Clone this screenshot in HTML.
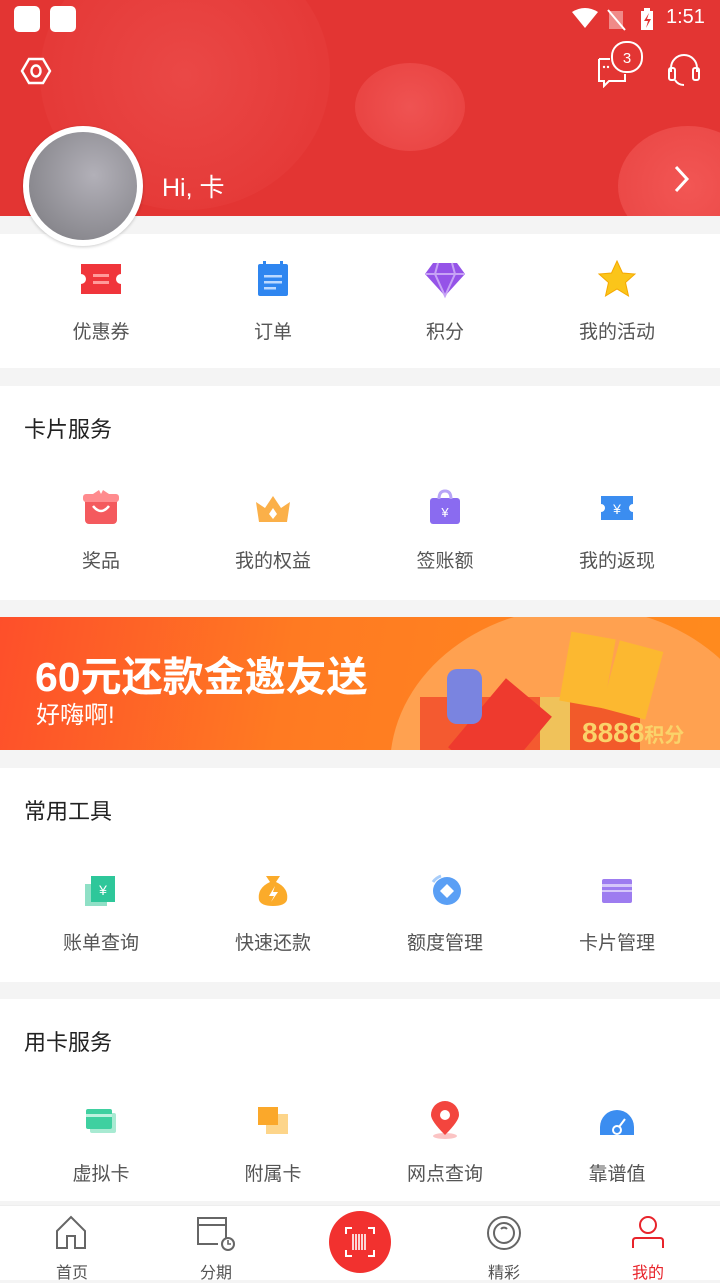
<!DOCTYPE html>
<html><head><meta charset="utf-8"><style>
*{margin:0;padding:0;box-sizing:border-box}
body{width:720px;height:1280px;overflow:hidden;background:#f4f4f4;font-family:"Liberation Sans","Noto Sans CJK SC",sans-serif;position:relative}
.hdr{position:absolute;left:0;top:0;width:720px;height:216px;background:#e33533;overflow:hidden}
.c{position:absolute;border-radius:50%}
.sec{position:absolute;left:0;width:720px;background:#fff}
.title{position:absolute;left:24px;font-size:22px;color:#222}
.row{position:absolute;left:0;width:720px;display:flex;padding-left:15px}
.it{width:172px;text-align:center;font-size:19px;color:#555;position:relative}
.it .ic{width:44px;height:44px;margin:0 auto;position:relative}
.tab{position:absolute;top:1205px;left:0;width:720px;height:75px;background:#fff;border-top:1px solid #eee}
.tb{position:absolute;top:53px;font-size:16px;color:#555;width:60px;text-align:center}
</style></head><body>
<div class="hdr">
 <div class="c" style="left:40px;top:-60px;width:290px;height:270px;background:radial-gradient(circle,#ea4846 0%,#e53a38 70%,#e33533 100%)"></div>
 <div class="c" style="left:355px;top:63px;width:110px;height:88px;background:radial-gradient(circle,#ef5352,#e8403e)"></div>
 <div class="c" style="left:618px;top:126px;width:140px;height:120px;background:radial-gradient(circle,#f25654,#e94543)"></div>
 <div style="position:absolute;left:14px;top:6px;width:26px;height:26px;background:#fff;border-radius:5px"></div>
 <div style="position:absolute;left:50px;top:6px;width:26px;height:26px;background:#fff;border-radius:5px"></div>
 <svg style="position:absolute;left:570px;top:6px" width="140" height="28">
  <path d="M2 6 Q15 -2 28 6 L15 22Z" fill="#fff"/>
  <rect x="39" y="5" width="14" height="18" fill="#f08a88"/><line x1="38" y1="4" x2="55" y2="24" stroke="#fff" stroke-width="2"/>
  <rect x="71" y="5" width="12" height="19" fill="#fff"/><rect x="74" y="2" width="6" height="3" fill="#fff"/><path d="M79 7 L74 15 L78 15 L76 22 L81 13 L77 13Z" fill="#e33533"/>
 </svg>
 <div style="position:absolute;left:666px;top:6px;color:#fff;font-size:20px">1:51</div>
 <svg style="position:absolute;left:20px;top:56px" width="32" height="30"><path d="M9 3 H23 L30 15 L23 27 H9 L2 15Z" fill="none" stroke="#fff" stroke-width="2.4"/><ellipse cx="16" cy="15" rx="4.5" ry="5.5" fill="none" stroke="#fff" stroke-width="2.4"/></svg>
 <svg style="position:absolute;left:596px;top:40px" width="50" height="48"><path d="M3 19 H14 M3 19 V41 H8 V46 L13 41 H29 V34" fill="none" stroke="#fff" stroke-width="2"/><rect x="16" y="2" width="30" height="30" rx="14" fill="#e33533" stroke="#fff" stroke-width="2"/><text x="31" y="23" fill="#fff" font-size="15" text-anchor="middle" font-family="Liberation Sans">3</text><circle cx="8" cy="27" r="1.2" fill="#fff"/><circle cx="12" cy="27" r="1.2" fill="#fff"/></svg>
 <svg style="position:absolute;left:666px;top:54px" width="36" height="34"><path d="M5 18 V14 A13 13 0 0 1 31 14 V18" fill="none" stroke="#fff" stroke-width="2"/><rect x="3" y="14" width="6" height="12" rx="2" fill="none" stroke="#fff" stroke-width="2"/><rect x="27" y="14" width="6" height="12" rx="2" fill="none" stroke="#fff" stroke-width="2"/><path d="M9 26 Q12 31 18 31" fill="none" stroke="#fff" stroke-width="2"/></svg>
 <div style="position:absolute;left:162px;top:168px;color:#fff;font-size:25px">Hi, 卡</div>
 <svg style="position:absolute;left:672px;top:164px" width="20" height="30"><path d="M4 3 L15 15 L4 27" fill="none" stroke="#fff" stroke-width="3"/></svg>
</div>
<div class="sec" style="top:234px;height:134px">
 <div class="row" style="top:26px">
  <div class="it"><div class="ic"><svg width="44" height="40"><path d="M2 4 H42 V14 A5 5 0 0 0 42 24 V34 H2 V24 A5 5 0 0 0 2 14Z" fill="#f0353b"/><rect x="14" y="14" width="16" height="3" fill="#ff9a9a"/><rect x="14" y="21" width="16" height="3" fill="#ff9a9a"/></svg></div><div style="margin-top:13px">优惠券</div></div>
  <div class="it"><div class="ic"><svg width="44" height="40"><rect x="7" y="4" width="30" height="32" rx="2" fill="#2f86f0"/><rect x="12" y="1" width="3" height="6" fill="#2f86f0"/><rect x="29" y="1" width="3" height="6" fill="#2f86f0"/><rect x="13" y="15" width="18" height="2.5" fill="#bcd9ff"/><rect x="13" y="21" width="18" height="2.5" fill="#bcd9ff"/><rect x="13" y="27" width="12" height="2.5" fill="#bcd9ff"/></svg></div><div style="margin-top:13px">订单</div></div>
  <div class="it"><div class="ic"><svg width="44" height="40"><path d="M10 3 H34 L42 14 L22 36 L2 14Z" fill="#9553e8"/><path d="M2 14 H42 M15 3 L12 14 L22 36 L32 14 L29 3" fill="none" stroke="#c7a3f5" stroke-width="2"/></svg></div><div style="margin-top:13px">积分</div></div>
  <div class="it"><div class="ic"><svg width="44" height="40"><path d="M22 1 L27.5 13 L40 14 L30.5 22.5 L33.5 36 L22 29 L10.5 36 L13.5 22.5 L4 14 L16.5 13Z" fill="#fbc51a" stroke="#f5a800" stroke-width="1"/></svg></div><div style="margin-top:13px">我的活动</div></div>
 </div>
</div>
<div class="sec" style="top:386px;height:214px">
 <div class="title" style="top:26px">卡片服务</div>
 <div class="row" style="top:100px">
  <div class="it"><div class="ic"><svg width="44" height="44"><rect x="6" y="10" width="32" height="28" rx="4" fill="#f45a5e"/><rect x="4" y="8" width="36" height="8" rx="3" fill="#ff8b8e"/><path d="M14 20 Q22 30 30 20" fill="none" stroke="#fff" stroke-width="2.5"/><path d="M14 8 L20 4 L22 8 L24 4 L30 8" fill="#ff8b8e"/></svg></div><div style="margin-top:16px">奖品</div></div>
  <div class="it"><div class="ic"><svg width="44" height="44"><path d="M5 16 L14 22 L22 10 L30 22 L39 16 L36 36 H8Z" fill="#fbb049"/><path d="M22 22 L26 28 L22 33 L18 28Z" fill="#fff"/></svg></div><div style="margin-top:16px">我的权益</div></div>
  <div class="it"><div class="ic"><svg width="44" height="44"><rect x="7" y="12" width="30" height="26" rx="3" fill="#8a6bf0"/><path d="M16 13 Q16 5 22 5 Q28 5 28 13" fill="none" stroke="#b7a4f7" stroke-width="3"/><text x="22" y="31" fill="#fff" font-size="13" text-anchor="middle" font-family="Liberation Sans">¥</text></svg></div><div style="margin-top:16px">签账额</div></div>
  <div class="it"><div class="ic"><svg width="44" height="44"><path d="M6 10 H38 V18 A4 4 0 0 0 38 26 V34 H6 V26 A4 4 0 0 0 6 18Z" fill="#3b8df0"/><text x="22" y="28" fill="#fff" font-size="14" text-anchor="middle" font-family="Liberation Sans">¥</text></svg></div><div style="margin-top:16px">我的返现</div></div>
 </div>
</div>
<div style="position:absolute;left:0;top:617px;width:720px;height:133px;background:linear-gradient(100deg,#fe4f2a 0%,#ff7a22 40%,#ff8b1e 100%);overflow:hidden">
 <div class="c" style="left:390px;top:-10px;width:380px;height:320px;background:#ffa150"></div>
 <div style="position:absolute;left:35px;top:26px;color:#fff;font-size:41px;font-weight:bold;letter-spacing:0px">60元还款金邀友送</div>
 <div style="position:absolute;left:36px;top:78px;color:#fff;font-size:24px">好嗨啊!</div>
 <div style="position:absolute;left:420px;top:80px;width:150px;height:55px;background:#f45a30"></div>
 <div style="position:absolute;left:540px;top:80px;width:100px;height:55px;background:#f0c25a"></div>
 <div style="position:absolute;left:570px;top:80px;width:70px;height:55px;background:#f25a2a"></div>
 <div style="position:absolute;left:565px;top:18px;width:45px;height:70px;background:#fcb830;transform:rotate(10deg)"></div>
 <div style="position:absolute;left:610px;top:28px;width:45px;height:70px;background:#fcb830;transform:rotate(15deg)"></div>
 <div style="position:absolute;left:470px;top:70px;width:60px;height:90px;background:#ee3a2e;transform:rotate(40deg)"></div>
 <div style="position:absolute;left:447px;top:52px;width:35px;height:55px;background:#7a84e0;border-radius:10px"></div>
 <div style="position:absolute;left:582px;top:100px;color:#fad36a;font-size:28px;font-weight:bold">8888<span style="font-size:20px">积分</span></div>
</div>
<div class="sec" style="top:768px;height:214px">
 <div class="title" style="top:26px">常用工具</div>
 <div class="row" style="top:100px">
  <div class="it"><div class="ic"><svg width="44" height="44"><rect x="6" y="16" width="22" height="22" fill="#8fe0c6"/><rect x="12" y="8" width="24" height="26" fill="#2ec79a"/><text x="24" y="27" fill="#fff" font-size="14" text-anchor="middle" font-family="Liberation Sans">¥</text></svg></div><div style="margin-top:16px">账单查询</div></div>
  <div class="it"><div class="ic"><svg width="44" height="44"><path d="M15 8 H29 L25 14 Q38 20 36 32 Q34 38 22 38 Q10 38 8 32 Q6 20 19 14Z" fill="#fbab2a"/><path d="M24 18 L18 28 H23 L20 34 L27 24 H22Z" fill="#fff"/></svg></div><div style="margin-top:16px">快速还款</div></div>
  <div class="it"><div class="ic"><svg width="44" height="44"><circle cx="24" cy="23" r="14" fill="#5a9ff5"/><path d="M24 16 L31 23 L24 30 L17 23Z" fill="#fff"/><path d="M10 14 A16 16 0 0 1 18 8" fill="none" stroke="#a8cdfa" stroke-width="3"/></svg></div><div style="margin-top:16px">额度管理</div></div>
  <div class="it"><div class="ic"><svg width="44" height="44"><rect x="7" y="11" width="30" height="24" rx="2" fill="#9d7cf0"/><rect x="7" y="16" width="30" height="3" fill="#d5c7fa"/><rect x="7" y="22" width="30" height="2" fill="#d5c7fa"/></svg></div><div style="margin-top:16px">卡片管理</div></div>
 </div>
</div>
<div class="sec" style="top:999px;height:202px">
 <div class="title" style="top:26px">用卡服务</div>
 <div class="row" style="top:100px">
  <div class="it"><div class="ic"><svg width="44" height="44"><rect x="11" y="14" width="26" height="20" rx="2" fill="#a8ead2"/><rect x="7" y="10" width="26" height="20" rx="2" fill="#3fd0a0"/><rect x="7" y="15" width="26" height="3" fill="#bff2df"/></svg></div><div style="margin-top:16px">虚拟卡</div></div>
  <div class="it"><div class="ic"><svg width="44" height="44"><rect x="15" y="15" width="22" height="20" fill="#fdd58a"/><rect x="7" y="8" width="20" height="18" fill="#fba82a"/></svg></div><div style="margin-top:16px">附属卡</div></div>
  <div class="it"><div class="ic"><svg width="44" height="44"><ellipse cx="22" cy="37" rx="12" ry="3" fill="#fbc4c4"/><path d="M22 36 Q8 22 8 16 A14 14 0 0 1 36 16 Q36 22 22 36Z" fill="#f3453e"/><circle cx="22" cy="16" r="5" fill="#fff"/></svg></div><div style="margin-top:16px">网点查询</div></div>
  <div class="it"><div class="ic"><svg width="44" height="44"><path d="M5 36 V28 A17 17 0 0 1 39 28 V36Z" fill="#3b8df0"/><circle cx="22" cy="31" r="4" fill="none" stroke="#fff" stroke-width="2"/><path d="M24 28 L30 20" stroke="#fff" stroke-width="2"/></svg></div><div style="margin-top:16px">靠谱值</div></div>
 </div>
</div>
<div class="tab">
 <svg style="position:absolute;left:54px;top:8px" width="36" height="36"><path d="M3 17 L17 3 L31 17 V34 H21 V22 H13 V34 H3Z" fill="none" stroke="#666" stroke-width="2"/></svg>
 <div class="tb" style="left:42px">首页</div>
 <svg style="position:absolute;left:196px;top:10px" width="44" height="36"><path d="M30 23 V2 H2 V28 H22" fill="none" stroke="#666" stroke-width="2"/><line x1="2" y1="9" x2="30" y2="9" stroke="#666" stroke-width="2"/><circle cx="32" cy="28" r="6" fill="none" stroke="#666" stroke-width="2"/><path d="M32 24 V28 H35" fill="none" stroke="#666" stroke-width="1.6"/></svg>
 <div class="tb" style="left:186px">分期</div>
 <div style="position:absolute;left:329px;top:5px;width:62px;height:62px;border-radius:50%;background:#f2312f"></div>
 <svg style="position:absolute;left:344px;top:20px" width="32" height="32"><path d="M2 8 V2 H8 M24 2 H30 V8 M30 24 V30 H24 M8 30 H2 V24" fill="none" stroke="#fff" stroke-width="2"/><path d="M9 8 V24 M12 8 V24 M15 8 V24 M18 8 V24 M21 8 V24" stroke="#fff" stroke-width="1.6"/></svg>
 <svg style="position:absolute;left:485px;top:8px" width="38" height="38"><circle cx="19" cy="19" r="16" fill="none" stroke="#666" stroke-width="2"/><circle cx="19" cy="19" r="10" fill="none" stroke="#666" stroke-width="2"/><path d="M16 15 A4 4 0 0 1 22 15" fill="none" stroke="#666" stroke-width="2"/></svg>
 <div class="tb" style="left:474px">精彩</div>
 <svg style="position:absolute;left:630px;top:8px" width="36" height="36"><circle cx="18" cy="11" r="8" fill="none" stroke="#e8242b" stroke-width="2"/><path d="M3 34 V27 Q3 24 6 24 H30 Q33 24 33 27 V34" fill="none" stroke="#e8242b" stroke-width="2"/></svg>
 <div class="tb" style="left:618px;color:#e8242b">我的</div>
</div>
<div style="position:absolute;left:23px;top:126px;width:120px;height:120px;border-radius:50%;background:#fff;box-shadow:0 1px 3px rgba(0,0,0,.2)"></div>
<div style="position:absolute;left:29px;top:132px;width:108px;height:108px;border-radius:50%;background:radial-gradient(ellipse at 60% 40%,#b2b0b8,#8b8a90 70%,#77767c)"></div>
</body></html>
